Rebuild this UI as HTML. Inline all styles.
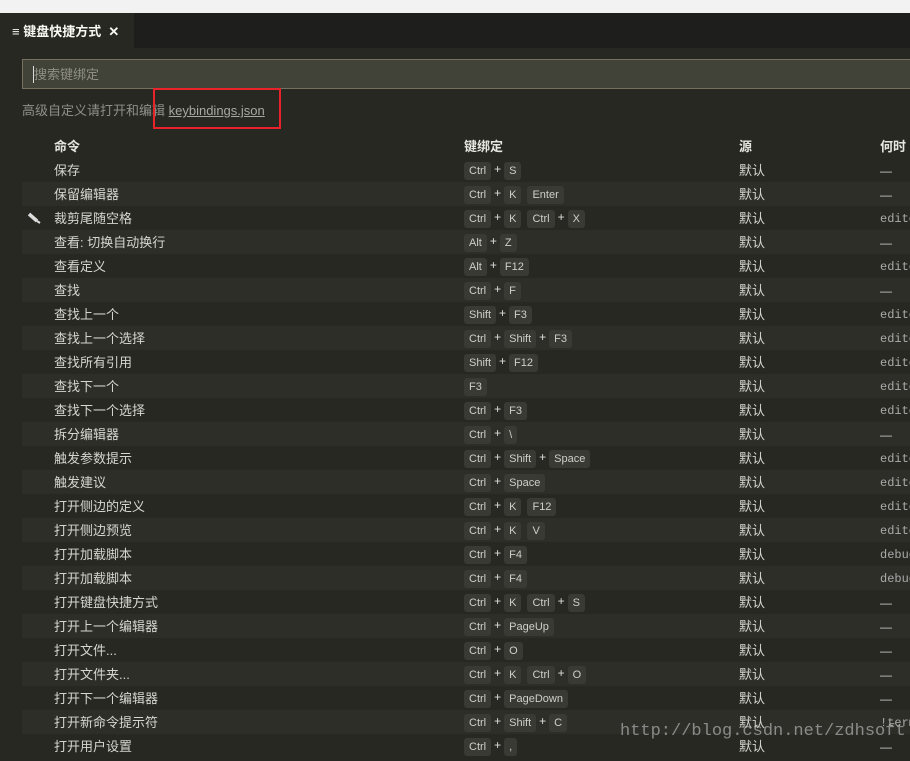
<!DOCTYPE html>
<html><head><meta charset="utf-8">
<style>
*{margin:0;padding:0;box-sizing:border-box}
body{width:910px;height:752px;overflow:hidden;background:#272822;font-family:"Liberation Sans","Noto Sans CJK SC",sans-serif;color:#ccccc4;position:relative}
.top{position:absolute;left:0;top:0;width:910px;height:13px;background:#f2f2f2}
.tabbar{position:absolute;left:0;top:13px;width:910px;height:35px;background:#1e1f1c}
.tab{position:absolute;left:0;top:0;width:134px;height:35px;background:#272822;color:#f8f8f2;font-size:13px;font-weight:bold;line-height:37px;padding-left:12px}
.search{position:absolute;left:22px;top:59px;width:900px;height:30px;background:#414339;border:1px solid #75715e;font-size:13px;line-height:30px;padding-left:11px;color:#8f8f84}
.search:before{content:"";position:absolute;left:10px;top:6px;width:1px;height:17px;background:#ddd}
.adv{position:absolute;left:22px;top:100px;font-size:13px;color:#8f8f88}
.adv u{color:#a8a8a0}
.red{position:absolute;left:153px;top:88px;width:128px;height:41px;border:2px solid #e8242a}
.hdr{position:absolute;top:136px;font-size:13px;font-weight:bold;color:#e6e6e0}
.row{position:absolute;left:22px;width:900px;height:24px;font-size:13px;line-height:26px}
.row.alt{background:#2d2e28}
.row .c{position:absolute;left:32px;color:#d6d6d0}
.row .k{position:absolute;left:442px;top:4px;height:18px;display:flex;align-items:center;font-size:11px}
.kb{background:#393a34;border-radius:3px;padding:0 5px;height:18px;line-height:18px;color:#cfcfc8}
.p{margin:0 3px;color:#ddd;position:relative;top:-2px;font-size:12px}
.sp{width:6px}
.row .s{position:absolute;left:717px;color:#d6d6d0}
.row .w{position:absolute;left:858px;font-family:"Liberation Mono",monospace;color:#aaa;font-size:12px;white-space:nowrap}
.wm{position:absolute;left:620px;top:722px;font-family:"Liberation Mono",monospace;font-size:17px;color:rgba(200,200,200,0.6)}
</style></head><body>
<div class="top"></div>
<div class="tabbar"><div class="tab">≡ 键盘快捷方式 &nbsp;<b>✕</b></div></div>
<div class="search">搜索键绑定</div>
<div class="adv">高级自定义请打开和编辑 <u>keybindings.json</u></div>
<div class="red"></div>
<div class="hdr" style="left:54px">命令</div>
<div class="hdr" style="left:464px">键绑定</div>
<div class="hdr" style="left:739px">源</div>
<div class="hdr" style="left:880px">何时</div>
<div id="rows"></div>
<script>
var d=[
["保存","Ctrl+S","—"],["保留编辑器","Ctrl+K Enter","—"],["裁剪尾随空格","Ctrl+K Ctrl+X","editor"],
["查看: 切换自动换行","Alt+Z","—"],["查看定义","Alt+F12","editor"],["查找","Ctrl+F","—"],
["查找上一个","Shift+F3","editor"],["查找上一个选择","Ctrl+Shift+F3","editor"],["查找所有引用","Shift+F12","editor"],
["查找下一个","F3","editor"],["查找下一个选择","Ctrl+F3","editor"],["拆分编辑器","Ctrl+\\","—"],
["触发参数提示","Ctrl+Shift+Space","editor"],["触发建议","Ctrl+Space","editor"],["打开侧边的定义","Ctrl+K F12","editor"],
["打开侧边预览","Ctrl+K V","editor"],["打开加载脚本","Ctrl+F4","debug"],["打开加载脚本","Ctrl+F4","debug"],
["打开键盘快捷方式","Ctrl+K Ctrl+S","—"],["打开上一个编辑器","Ctrl+PageUp","—"],["打开文件...","Ctrl+O","—"],
["打开文件夹...","Ctrl+K Ctrl+O","—"],["打开下一个编辑器","Ctrl+PageDown","—"],["打开新命令提示符","Ctrl+Shift+C","!term"],
["打开用户设置","Ctrl+,","—"]];
var h="";
d.forEach(function(r,i){
 var ks=r[1].split(" ").map(function(ch){
   var parts=ch==="Ctrl+,"?["Ctrl",","]:ch.split("+");
   if(ch.indexOf("+")<0)parts=[ch];
   return parts.map(function(p){return '<span class="kb">'+p+'</span>'}).join('<span class="p">+</span>');
 }).join('<span class="sp"></span>');
 var w=r[2]==="—"?'<span style="font-family:Liberation Sans;color:#ccc">—</span>':r[2];
 var icon=i==2?'<svg style="position:absolute;left:5px;top:6px" width="14" height="12" viewBox="0 0 14 12"><path d="M2 2 L10 9" stroke="#ddd" stroke-width="3.5"/><path d="M10 9 L13 11" stroke="#ddd" stroke-width="2"/></svg>':'';
 h+='<div class="row'+(i%2?' alt':'')+'" style="top:'+(158+i*24)+'px">'+icon+'<span class="c">'+r[0]+'</span><div class="k">'+ks+'</div><span class="s">默认</span><span class="w">'+w+'</span></div>';
});
document.getElementById("rows").innerHTML=h;
</script>
<div class="wm">http://blog.csdn.net/zdhsoft</div>
</body></html>
